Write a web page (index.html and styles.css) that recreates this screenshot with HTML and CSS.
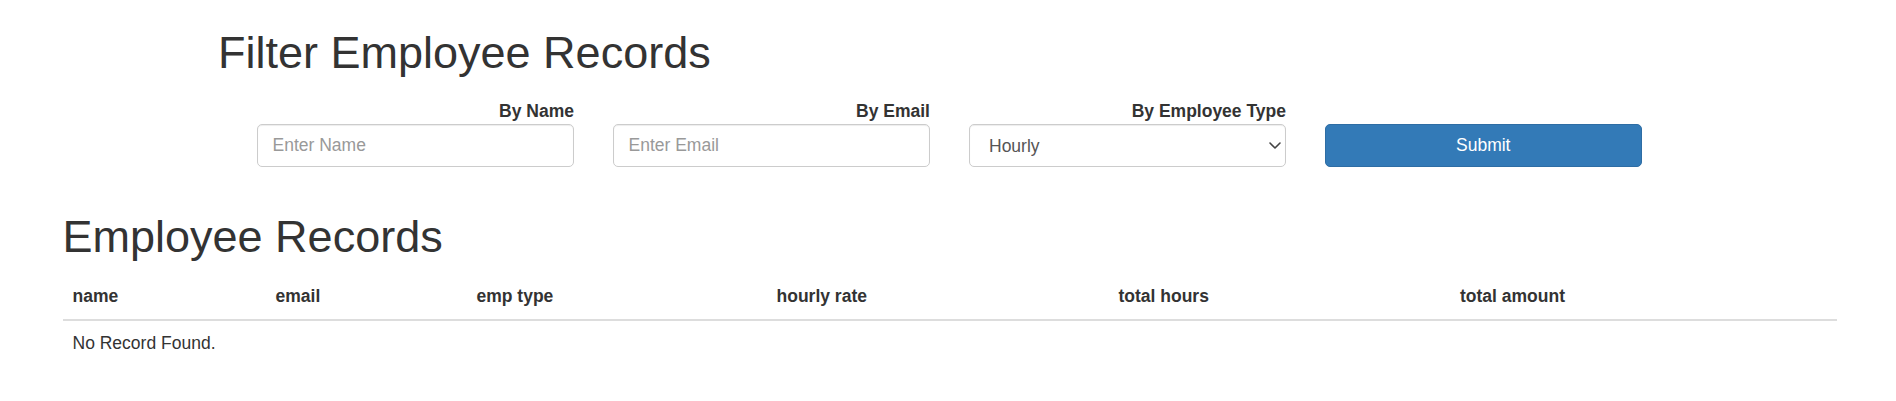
FILE: index.html
```html
<!DOCTYPE html>
<html>
<head>
<meta charset="utf-8">
<title>Employee Records</title>
<link rel="stylesheet" href="styles.css">
</head>
<body>
<div class="page">
  <section class="filter">
    <h1 class="title filter-title">Filter Employee Records</h1>
    <form class="filter-form">
      <div class="field">
        <label class="field-label">By Name</label>
        <input class="control" type="text" placeholder="Enter Name">
      </div>
      <div class="field">
        <label class="field-label">By Email</label>
        <input class="control" type="text" placeholder="Enter Email">
      </div>
      <div class="field">
        <label class="field-label">By Employee Type</label>
        <div class="select-wrap">
          <select class="control select">
            <option>Hourly</option>
          </select>
          <svg class="chevron" width="12" height="7" viewBox="0 0 12 7" aria-hidden="true">
            <path d="M1 1 L6 6 L11 1" fill="none" stroke="#444" stroke-width="1.6" stroke-linecap="round" stroke-linejoin="round"/>
          </svg>
        </div>
      </div>
      <div class="field field-btn">
        <button class="btn-primary" type="button">Submit</button>
      </div>
    </form>
  </section>
  <section class="records">
    <h1 class="title">Employee Records</h1>
    <table class="table">
      <colgroup>
        <col class="c-name">
        <col class="c-email">
        <col class="c-type">
        <col class="c-rate">
        <col class="c-hours">
        <col class="c-amount">
      </colgroup>
      <thead>
        <tr>
          <th>name</th>
          <th>email</th>
          <th>emp type</th>
          <th>hourly rate</th>
          <th>total hours</th>
          <th>total amount</th>
        </tr>
      </thead>
      <tbody>
        <tr>
          <td colspan="6">No Record Found.</td>
        </tr>
      </tbody>
    </table>
  </section>
</div>
</body>
</html>
```
FILE: styles.css
```css
* {
  box-sizing: border-box;
}

body {
  margin: 0;
  font-family: "Liberation Sans", Arial, sans-serif;
  font-size: 17.5px;
  line-height: 1.42857;
  color: #333;
  background: #fff;
}

.page {
  padding: 0 59px 0 62.5px;
}

.title {
  font-size: 45px;
  font-weight: 500;
  line-height: 1.1;
  margin: 0;
}

.filter-title {
  margin-top: 28px;
  margin-left: 155.5px;
}

.filter-form {
  display: grid;
  grid-template-columns: repeat(4, 317.5px);
  column-gap: 38.5px;
  margin: 21px 0 0 194px;
}

.field {
  display: flex;
  flex-direction: column;
}

.field-btn {
  justify-content: flex-end;
}

.field-label {
  display: block;
  text-align: right;
  font-weight: 700;
  line-height: 25px;
  margin-bottom: 0.6px;
}

.control {
  display: block;
  width: 100%;
  height: 42.5px;
  padding: 7.5px 15px;
  font-family: inherit;
  font-size: 17.5px;
  color: #555;
  background: #fff;
  border: 1.25px solid #ccc;
  border-radius: 5px;
  box-shadow: inset 0 1px 1px rgba(0, 0, 0, 0.075);
}

.control::placeholder {
  color: #999;
}

.select-wrap {
  position: relative;
}

.select {
  appearance: none;
  -webkit-appearance: none;
  padding: 8px 30px 7px 19.5px;
}

.chevron {
  position: absolute;
  right: 5px;
  top: 18px;
  pointer-events: none;
}

.btn-primary {
  display: block;
  width: 100%;
  height: 42.5px;
  font-family: inherit;
  font-size: 17.5px;
  color: #fff;
  background: #337ab7;
  border: 1.25px solid #2e6da4;
  border-radius: 5px;
}

.records {
  margin-top: 45.5px;
}

.table {
  width: 100%;
  table-layout: fixed;
  border-collapse: collapse;
  margin-top: 12px;
}

.c-name { width: 203px; }
.c-email { width: 201px; }
.c-type { width: 300px; }
.c-rate { width: 342px; }
.c-hours { width: 341.5px; }

.table th,
.table td {
  text-align: left;
  padding: 10px;
  line-height: 25px;
}

.table th {
  font-weight: 700;
  border-bottom: 2.5px solid #ddd;
}
```
